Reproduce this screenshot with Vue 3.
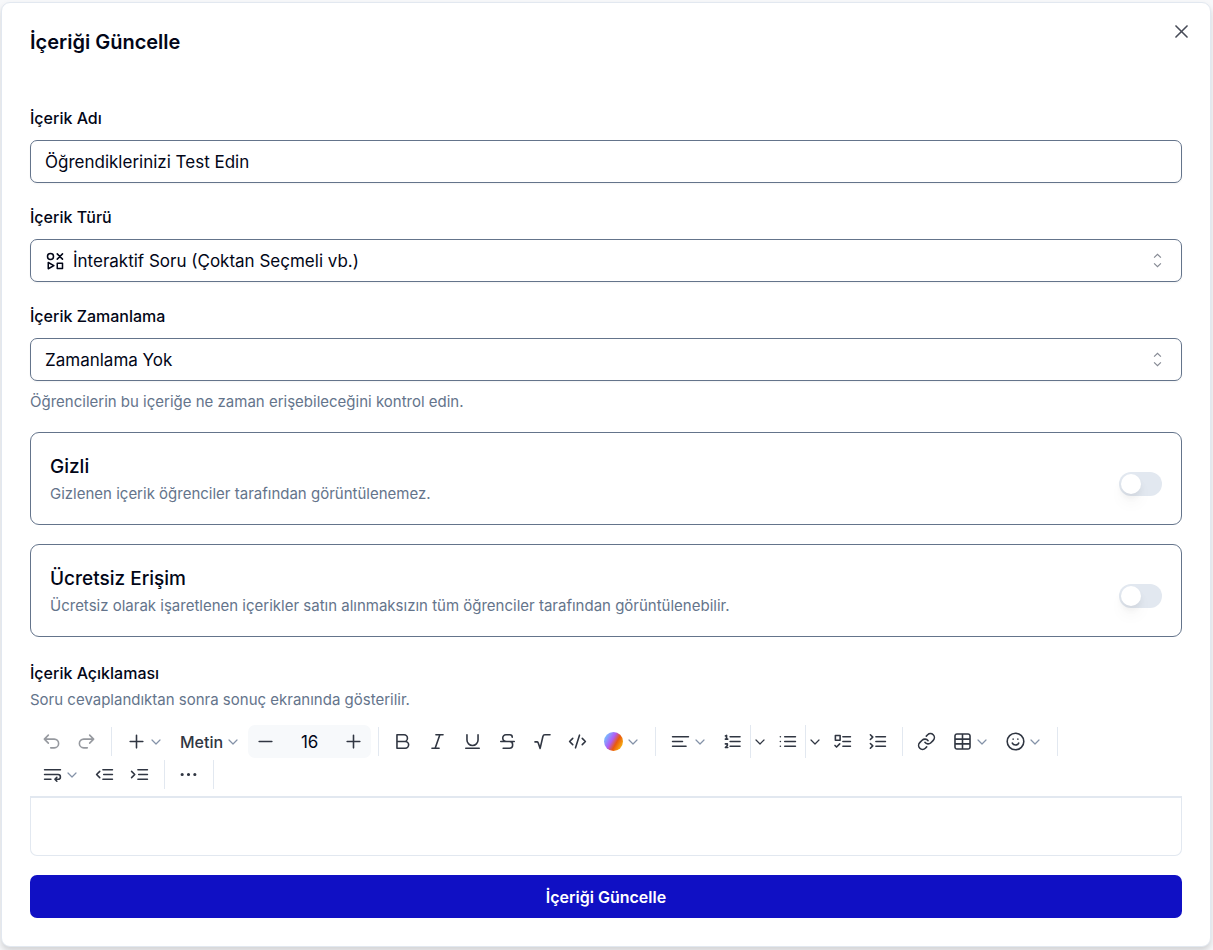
<script setup>
import { ref } from 'vue';

const name = ref('Öğrendiklerinizi Test Edin');
const type = ref('quiz');
const schedule = ref('none');
const hidden = ref(false);
const free = ref(false);
const fontSize = ref(16);

const toolGroups = [
  [
    { icon: 'undo', label: 'Geri al', disabled: true },
    { icon: 'redo', label: 'Yinele', disabled: true },
  ],
  [
    { icon: 'plus', label: 'Ekle', menu: true },
    { text: 'Metin', label: 'Metin', menu: true },
    { size: true, label: 'Yazı boyutu' },
  ],
  [
    { icon: 'bold', label: 'Kalın' },
    { icon: 'italic', label: 'İtalik' },
    { icon: 'underline', label: 'Altı çizili' },
    { icon: 'strike', label: 'Üstü çizili' },
    { icon: 'root', label: 'Denklem' },
    { icon: 'code', label: 'Kod' },
    { color: true, label: 'Renk', menu: true },
  ],
  [
    { icon: 'align', label: 'Hizala', menu: true },
    { icon: 'ordered', label: 'Numaralı liste', split: true },
    { icon: 'bullets', label: 'Madde listesi', split: true },
    { icon: 'todo', label: 'Yapılacaklar' },
    { icon: 'toggle', label: 'Açılır liste' },
  ],
  [
    { icon: 'link', label: 'Bağlantı' },
    { icon: 'table', label: 'Tablo', menu: true },
    { icon: 'smile', label: 'Emoji', menu: true },
  ],
  [
    { icon: 'wrap', label: 'Satır aralığı', menu: true },
    { icon: 'outdent', label: 'Girintiyi azalt' },
    { icon: 'indent', label: 'Girintiyi artır' },
  ],
  [{ icon: 'dots', label: 'Diğer' }],
];

const icons = {
  undo: 'M8 14 3 9l5-5M3 9h12.5a5.5 5.5 0 0 1 0 11H11',
  redo: 'm16 14 5-5-5-5M21 9H8.5a5.5 5.5 0 0 0 0 11H13',
  plus: 'M4 12h16M12 4v16',
  minus: 'M4 12h16',
  bold: 'M5 3.5h9a4 4 0 0 1 0 8.5H5zM5 12h10.5a4.25 4.25 0 0 1 0 8.5H5z',
  italic: 'M10 3.5h9M5 20.5h9M15 3.5l-6 17',
  underline: 'M5 3.5v6.500a7 7 0 0 0 14 0V3.5M3.5 20.5h17',
  strike: 'M18 6.5c0-2-1-3-3-3h-5a4 4 0 0 0-4 4.2C6 10.5 8 12 11 12h3.5c2.5 0 4 1.5 4 4s-1.5 4.5-4 4.5H6.5M3.5 12h17',
  root: 'M2.5 12.5H5c.8 0 1.2.4 1.5 1.2l2.5 7 3.5-15c.3-1.4 1-2.2 2.5-2.2h6.5',
  code: 'm18 16 4-4-4-4M6 8l-4 4 4 4M14.5 4l-5 16',
  align: 'M2 6h20M2 12h12.5M2 18h17',
  ordered: 'M9 6h12.5M9 12h12.5M9 18h12.5M3 5l1.5-.7V9M3 9h3M3 15h2.5v2L3 19.5h3',
  bullets: 'M8.5 6H22M8.5 12H22M8.5 18H22M3 6h.01M3 12h.01M3 18h.01',
  todo: 'M3 4.5h6v6H3zM2.5 17l2 2 4-4M12.5 6h9.5M12.5 12h9.5M12.5 18h9.5',
  toggle: 'm3 3.5 3 3-3 3M3 14.5l3 3-3 3M10 6h12M10 12h12M10 18h12',
  link: 'M10 13a5 5 0 0 0 7.54.54l3-3a5 5 0 0 0-7.07-7.07l-1.72 1.71M14 11a5 5 0 0 0-7.54-.54l-3 3a5 5 0 0 0 7.07 7.07l1.71-1.71',
  table: 'M5 2.5h14a2.5 2.5 0 0 1 2.5 2.5v14a2.5 2.5 0 0 1-2.5 2.5H5A2.5 2.5 0 0 1 2.5 19V5A2.5 2.5 0 0 1 5 2.5zM12 2.5v19M2.5 9h19M2.5 15h19',
  smile: 'M12 1.5a10.5 10.5 0 1 0 0 21 10.5 10.5 0 0 0 0-21zM8 14s1 2.5 4 2.5 4-2.5 4-2.5M9 9h.01M15 9h.01',
  wrap: 'M2 6h20M2 12h17a3 3 0 0 1 0 6h-4M17.5 15.5 15 18l2.5 2.5M2 18h8',
  outdent: 'm6 8-4 4 4 4M10 6h12M11 12h11M10 18h12',
  indent: 'm2 8 4 4-4 4M10 6h12M11 12h11M10 18h12',
  dots: 'M4 12h.01M12 12h.01M20 12h.01',
};
</script>

<template>
  <main class="page">
    <section class="dialog" role="dialog" aria-labelledby="dialog-title">
      <button type="button" class="close" aria-label="Kapat">
        <svg viewBox="0 0 24 24" class="icon"><path d="M5 5l14 14M19 5 5 19" /></svg>
      </button>
      <h2 id="dialog-title">İçeriği Güncelle</h2>

      <form @submit.prevent>
        <div class="field">
          <label for="name">İçerik Adı</label>
          <input id="name" v-model="name" type="text" class="control" />
        </div>

        <div class="field">
          <label for="type">İçerik Türü</label>
          <div class="select-box">
            <svg viewBox="0 0 24 24" class="icon lead">
              <circle cx="6" cy="6" r="4" />
              <path d="m15 2.5 7 7M22 2.5l-7 7M3 14l7.5 4.2L3 22.300zM15 15h7v7h-7z" />
            </svg>
            <select id="type" v-model="type" class="control with-icon">
              <option value="quiz">İnteraktif Soru (Çoktan Seçmeli vb.)</option>
            </select>
            <svg viewBox="0 0 15 15" class="sort">
              <path d="m4.500 5 3-3 3 3M4.500 10l3 3 3-3" />
            </svg>
          </div>
        </div>

        <div class="field">
          <label for="schedule">İçerik Zamanlama</label>
          <div class="select-box">
            <select id="schedule" v-model="schedule" class="control">
              <option value="none">Zamanlama Yok</option>
            </select>
            <svg viewBox="0 0 15 15" class="sort">
              <path d="m4.500 5 3-3 3 3M4.500 10l3 3 3-3" />
            </svg>
          </div>
        </div>
        <p class="hint schedule-hint">Öğrencilerin bu içeriğe ne zaman erişebileceğini kontrol edin.</p>

        <div class="option">
          <div>
            <label for="hidden">Gizli</label>
            <p class="hint">Gizlenen içerik öğrenciler tarafından görüntülenemez.</p>
          </div>
          <input id="hidden" v-model="hidden" type="checkbox" role="switch" class="switch" />
        </div>

        <div class="option">
          <div>
            <label for="free">Ücretsiz Erişim</label>
            <p class="hint">Ücretsiz olarak işaretlenen içerikler satın alınmaksızın tüm öğrenciler tarafından görüntülenebilir.</p>
          </div>
          <input id="free" v-model="free" type="checkbox" role="switch" class="switch" />
        </div>

        <div class="description">
          <label for="description">İçerik Açıklaması</label>
          <p class="hint">Soru cevaplandıktan sonra sonuç ekranında gösterilir.</p>
        </div>

        <div class="toolbar" role="toolbar" aria-label="Biçimlendirme">
          <div v-for="(group, i) in toolGroups" :key="i" class="group">
            <template v-for="tool in group" :key="tool.label">
              <div v-if="tool.size" class="font-size">
                <button type="button" class="tool" aria-label="Küçült" @click="fontSize--">
                  <svg viewBox="0 0 24 24" class="icon"><path :d="icons.minus" /></svg>
                </button>
                <input v-model="fontSize" type="text" :aria-label="tool.label" />
                <button type="button" class="tool" aria-label="Büyüt" @click="fontSize++">
                  <svg viewBox="0 0 24 24" class="icon"><path :d="icons.plus" /></svg>
                </button>
              </div>
              <button
                v-else
                type="button"
                class="tool"
                :class="{ menu: tool.menu }"
                :disabled="tool.disabled"
                :aria-label="tool.label"
              >
                <span v-if="tool.text">{{ tool.text }}</span>
                <span v-else-if="tool.color" class="swatch"></span>
                <svg v-else viewBox="0 0 24 24" class="icon" :class="tool.icon">
                  <path :d="icons[tool.icon]" />
                </svg>
                <svg v-if="tool.menu" viewBox="0 0 12 12" class="chevron">
                  <path d="m2 4 4 4 4-4" />
                </svg>
              </button>
              <button v-if="tool.split" type="button" class="split" :aria-label="tool.label + ' seçenekleri'">
                <svg viewBox="0 0 12 12" class="chevron"><path d="m2 4 4 4 4-4" /></svg>
              </button>
            </template>
            <span class="divider"></span>
          </div>
        </div>
        <textarea id="description" class="editor"></textarea>

        <button type="submit" class="submit">İçeriği Güncelle</button>
      </form>
    </section>
  </main>
</template>

<style>
body {
  background: #f7f8fa;
}
</style>

<style scoped>
.page {
  padding: 2px 2px 3px 1px;
  font-family: Inter, "Noto Sans", sans-serif;
  font-size: 16px;
  line-height: 24px;
  color: #020617;
}

.page * {
  box-sizing: border-box;
}

button,
input,
select,
textarea {
  font: inherit;
  color: inherit;
  margin: 0;
}

button {
  padding: 0;
  border: none;
  background: none;
  cursor: pointer;
}

h2,
p {
  margin: 0;
}

.dialog {
  position: relative;
  padding: 27px 28px 28px;
  background: #fff;
  border: 1px solid #e2e8f0;
  border-radius: 9px;
  box-shadow: 0 4px 6px rgba(0, 0, 0, 0.15);
}

h2 {
  font-size: 20px;
  font-weight: 600;
  margin-bottom: 52px;
}

.icon {
  display: block;
  width: 19px;
  height: 19px;
  fill: none;
  stroke: currentColor;
  stroke-width: 2;
  stroke-linecap: round;
  stroke-linejoin: round;
}

.close {
  position: absolute;
  top: 19px;
  right: 19px;
  color: #474b57;
}

.field {
  margin-bottom: 22px;
}

label {
  display: block;
  font-weight: 500;
}

.field label {
  margin-bottom: 10px;
}

.control {
  display: block;
  width: 100%;
  height: 43px;
  padding: 0 14px;
  border: 1px solid #64748b;
  border-radius: 7px;
  background: #fff;
  box-shadow: 0 1px 2px rgba(0, 0, 0, 0.05);
  font-size: 17px;
  appearance: none;
}

.with-icon {
  padding-left: 42px;
}

.select-box {
  position: relative;
}

.lead,
.sort {
  position: absolute;
  top: 13px;
  pointer-events: none;
}

.lead {
  left: 16px;
  width: 18px;
  height: 18px;
}

.sort {
  right: 16px;
  width: 17px;
  height: 17px;
  fill: none;
  stroke: #858993;
}

.hint {
  font-size: 15px;
  color: #64748b;
}

.schedule-hint {
  margin: -13px 0 18px;
}

.option {
  display: flex;
  align-items: center;
  justify-content: space-between;
  padding: 20px 19px 18px;
  margin-bottom: 19px;
  border: 1px solid #64748b;
  border-radius: 9px;
}

.option label {
  font-size: 19px;
  line-height: 28px;
}

.option .hint {
  margin-top: 1px;
}

.switch {
  flex: none;
  width: 43px;
  height: 24px;
  margin-top: 9px;
  padding: 2px;
  border-radius: 12px;
  background: #e2e8f0;
  appearance: none;
  cursor: pointer;
}

.switch::before {
  content: "";
  display: block;
  width: 20px;
  height: 20px;
  border-radius: 50%;
  background: #fff;
  box-shadow: 0 10px 15px rgba(0, 0, 0, 0.04), 0 4px 6px rgba(0, 0, 0, 0.05);
}

.switch:checked {
  background: #1010c4;
}

.switch:checked::before {
  margin-left: 19px;
}

.description {
  margin: 24px 0 13px;
}

.description .hint {
  margin-top: 3px;
}

.toolbar {
  display: flex;
  flex-wrap: wrap;
  column-gap: 6px;
  padding: 0 0 5px 4px;
  color: #303642;
}

.group {
  display: flex;
  align-items: center;
  height: 33px;
}

.divider {
  width: 1px;
  height: 29px;
  margin-left: 7px;
  background: #e2e8f0;
}

.tool {
  display: flex;
  align-items: center;
  gap: 4px;
  height: 33px;
  padding: 0 8px;
  font-weight: 500;
}

.tool:disabled {
  opacity: 0.5;
}

.menu {
  padding: 0 9px;
}

.chevron {
  display: block;
  width: 12px;
  height: 12px;
  fill: none;
  stroke: currentColor;
  stroke-width: 1.2;
  stroke-linecap: round;
  stroke-linejoin: round;
}

.menu .chevron {
  stroke: #8492a8;
}

.dots {
  stroke-width: 4;
}

.split {
  width: 20px;
  height: 33px;
  padding-left: 3px;
  border-left: 1px solid #e2e8f0;
}

.swatch {
  width: 19px;
  height: 19px;
  border-radius: 50%;
  background: linear-gradient(120deg, #6fc8ff 10%, #b05cf6 42%, #ea580c 62%, #facc15 95%);
}

.font-size {
  display: flex;
  border-radius: 7px;
  background: #f7f9fb;
}

.font-size input {
  width: 53px;
  padding: 0;
  border: none;
  background: none;
  text-align: center;
  font-size: 17px;
  color: #020617;
}

.editor {
  display: block;
  width: 100%;
  height: 60px;
  padding: 12px 14px;
  border: 1px solid #e2e8f0;
  border-top-width: 2px;
  border-radius: 0 0 7px 7px;
  background: #fff;
  resize: none;
}

.submit {
  display: block;
  width: 100%;
  height: 43px;
  margin-top: 19px;
  border-radius: 7px;
  background: #1010c4;
  color: #fff;
  font-weight: 600;
}
</style>
